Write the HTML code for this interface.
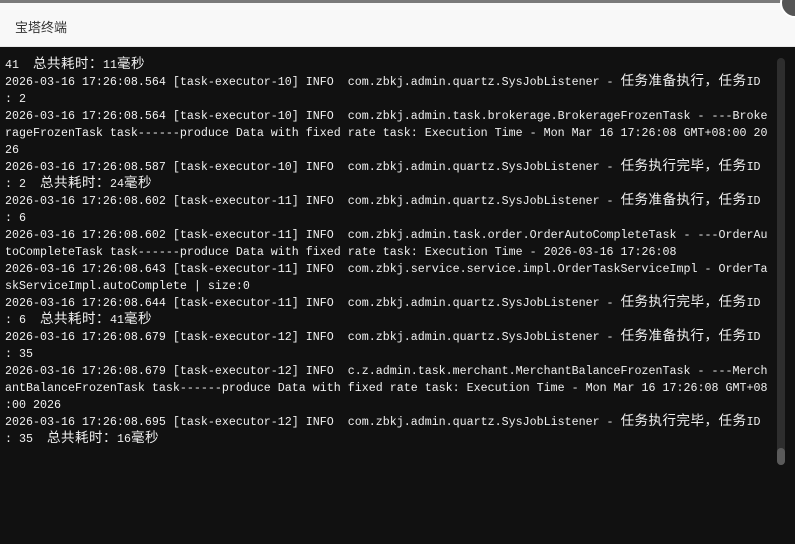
<!DOCTYPE html>
<html><head><meta charset="utf-8"><style>
html,body{margin:0;padding:0;width:795px;height:544px;overflow:hidden;background:#111;}
.top{position:absolute;left:0;top:0;width:795px;height:3px;background:#7a7a7a;}
.hdr{position:absolute;left:0;top:3px;width:795px;height:43px;background:#f8f8f8;border-bottom:1px solid #e8e8e8;font-family:"Liberation Sans","Noto Sans CJK SC",sans-serif;font-size:13px;color:#333;}
.hdr span{position:absolute;left:15px;top:14px;}
.close{position:absolute;left:780px;top:-12px;width:26px;height:26px;border-radius:50%;background:#555;border:2px solid #fff;}
.term{position:absolute;left:5px;top:57px;font-family:"Liberation Mono","Noto Sans CJK SC",monospace;font-size:11.67px;line-height:17px;color:#f0f0f0;white-space:pre;}
.term div{height:17px;line-height:17px;overflow:visible;}
.c{display:inline-block;vertical-align:top;height:17px;position:relative;top:-3px;font-family:"Noto Sans CJK SC",sans-serif;font-size:13.5px;line-height:17px;letter-spacing:0.5px;}
.track{position:absolute;left:777px;top:58px;width:8px;height:407px;background:#2e2e2e;border-radius:4px;}
.thumb{position:absolute;left:777px;top:448px;width:8px;height:17px;background:#5a5a5a;border-radius:4px;}
</style></head><body>
<div class="top"></div>
<div class="hdr"><span>宝塔终端</span></div>
<div class="close"></div>
<div class="term"><div>41  <span class="c">总共耗时：</span>11<span class="c">毫秒</span></div><div>2026-03-16 17:26:08.564 [task-executor-10] INFO  com.zbkj.admin.quartz.SysJobListener - <span class="c">任务准备执行，任务</span>ID</div><div>: 2</div><div>2026-03-16 17:26:08.564 [task-executor-10] INFO  com.zbkj.admin.task.brokerage.BrokerageFrozenTask - ---Broke</div><div>rageFrozenTask task------produce Data with fixed rate task: Execution Time - Mon Mar 16 17:26:08 GMT+08:00 20</div><div>26</div><div>2026-03-16 17:26:08.587 [task-executor-10] INFO  com.zbkj.admin.quartz.SysJobListener - <span class="c">任务执行完毕，任务</span>ID</div><div>: 2  <span class="c">总共耗时：</span>24<span class="c">毫秒</span></div><div>2026-03-16 17:26:08.602 [task-executor-11] INFO  com.zbkj.admin.quartz.SysJobListener - <span class="c">任务准备执行，任务</span>ID</div><div>: 6</div><div>2026-03-16 17:26:08.602 [task-executor-11] INFO  com.zbkj.admin.task.order.OrderAutoCompleteTask - ---OrderAu</div><div>toCompleteTask task------produce Data with fixed rate task: Execution Time - 2026-03-16 17:26:08</div><div>2026-03-16 17:26:08.643 [task-executor-11] INFO  com.zbkj.service.service.impl.OrderTaskServiceImpl - OrderTa</div><div>skServiceImpl.autoComplete | size:0</div><div>2026-03-16 17:26:08.644 [task-executor-11] INFO  com.zbkj.admin.quartz.SysJobListener - <span class="c">任务执行完毕，任务</span>ID</div><div>: 6  <span class="c">总共耗时：</span>41<span class="c">毫秒</span></div><div>2026-03-16 17:26:08.679 [task-executor-12] INFO  com.zbkj.admin.quartz.SysJobListener - <span class="c">任务准备执行，任务</span>ID</div><div>: 35</div><div>2026-03-16 17:26:08.679 [task-executor-12] INFO  c.z.admin.task.merchant.MerchantBalanceFrozenTask - ---Merch</div><div>antBalanceFrozenTask task------produce Data with fixed rate task: Execution Time - Mon Mar 16 17:26:08 GMT+08</div><div>:00 2026</div><div>2026-03-16 17:26:08.695 [task-executor-12] INFO  com.zbkj.admin.quartz.SysJobListener - <span class="c">任务执行完毕，任务</span>ID</div><div>: 35  <span class="c">总共耗时：</span>16<span class="c">毫秒</span></div></div>
<div class="track"></div><div class="thumb"></div>
</body></html>
